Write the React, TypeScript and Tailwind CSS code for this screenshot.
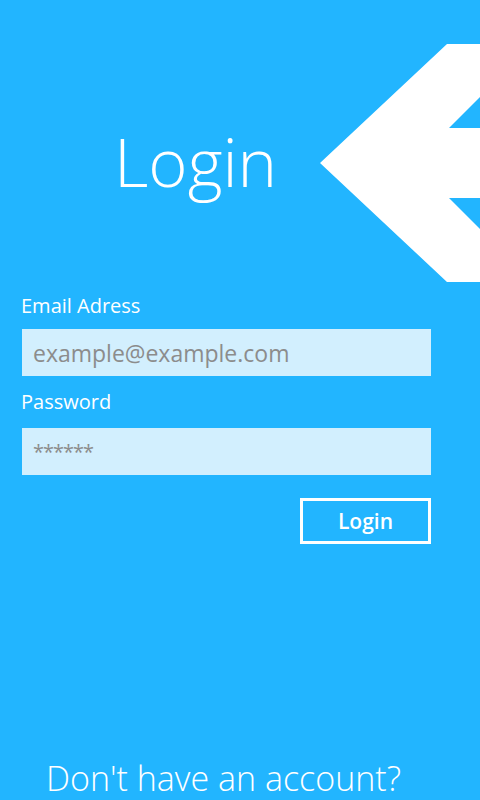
import React from "react";

function BackArrow() {
    return (
        <svg width="160" height="238" viewBox="320 44 160 238" className="shrink-0">
            <polygon
                fill="#ffffff"
                points="447,44 480,44 480,97 449,128 480,128 480,198 449,198 480,229 480,282 447,282 320,163"
            />
        </svg>
    );
}

export default function App() {
    return (
        <div
            className="flex h-[800px] w-[480px] flex-col overflow-hidden bg-[#22b5ff] text-white"
            style={{ fontFamily: '"Open Sans", "Noto Sans", sans-serif' }}
        >
            <header className="mt-[44px] flex h-[238px] items-center">
                <h1 className="flex-1 pl-[114px] pb-[4px] text-[67px] leading-none font-light">Login</h1>
                <BackArrow />
            </header>

            <form className="mt-[11px] flex flex-col px-[22px]" onSubmit={(e) => e.preventDefault()}>
                <label className="-ml-[1px] text-[20px] leading-[26px]">Email Adress</label>
                <input
                    type="email"
                    placeholder="example@example.com"
                    className="mt-[10px] h-[47px] w-[409px] bg-[#d2effe] px-[11px] text-[23px] text-[#333] outline-none placeholder:text-[#8c8c8c]"
                />
                <label className="-ml-[1px] mt-[13px] text-[20px] leading-[26px]">Password</label>
                <input
                    type="password"
                    placeholder="******"
                    className="mt-[13px] h-[47px] w-[409px] bg-[#d2effe] px-[11px] text-[20px] tracking-[-1px] text-[#333] outline-none placeholder:text-[#8c8c8c]"
                />
                <div className="mt-[23px] flex w-[409px] justify-end">
                    <button
                        type="submit"
                        className="h-[46px] w-[131px] border-[3px] border-white pt-[2px] text-[21px] font-semibold"
                    >
                        Login
                    </button>
                </div>
            </form>

            <div className="mt-auto pl-[46px]">
                <p className="text-[34px] leading-[44px] font-light whitespace-nowrap">Don't have an account?</p>
            </div>
        </div>
    );
}
